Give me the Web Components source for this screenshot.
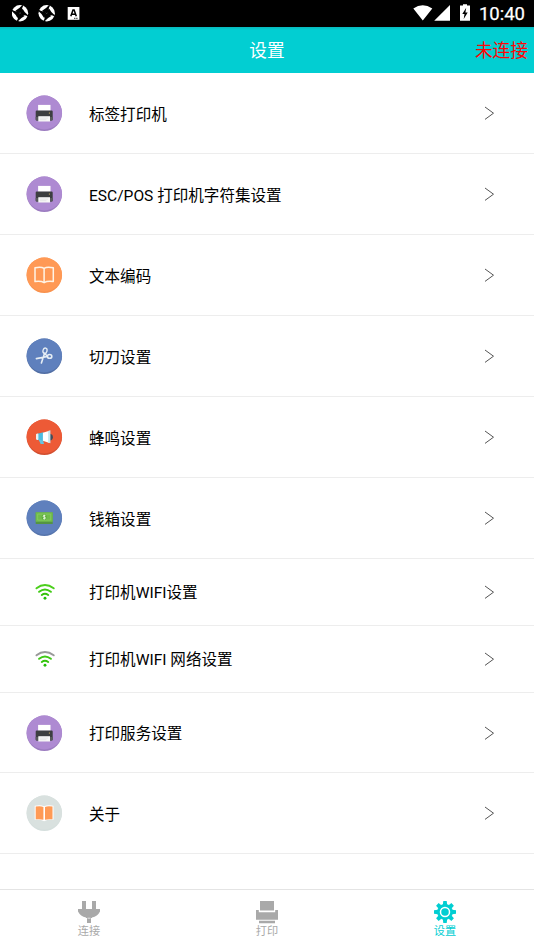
<!DOCTYPE html>
<html lang="zh-CN">
<head>
<meta charset="utf-8">
<title>设置</title>
<style>
html,body{margin:0;height:100%;background:#fff}
body{font-family:Roboto,"Noto Sans CJK SC",sans-serif;overflow:hidden}
</style>
</head>
<body>
<settings-app></settings-app>
<script>
const PRINTER = `<path d="M11.700 9.600h12.400v6H11.700z" fill="#fff"/><path d="M9.300 16.300q0-1 1-1h15q1 0 1 1v8q0 1-1 1h-15q-1 0-1-1z" fill="#3c3e40"/><path d="M9.300 21.600h17v2.700q0 1-1 1h-15q-1 0-1-1z" fill="#57595b"/><path d="M11.900 20.900h11.700v5.300H11.900z" fill="#f7f7f7"/><path d="M13.500 22.800h8M13.500 24.400h6.500" stroke="#d5d5d5" stroke-width=".5"/><circle cx="23" cy="17.700" r=".6" fill="#e8c060"/>`;
const disc = (c, d, inner) => `<svg width="37" height="36" viewBox="-.4 -.3 37 36"><circle cx="17.900" cy="18" r="17.700" fill="${d}"/><path d="M.2 17.100a17.700 16.800 0 0 1 35.400 0a17.700 17 0 0 1-35.400 0z" fill="${c}"/>${inner}</svg>`;
const wifi = (outer) => `<svg width="37" height="36" viewBox="-.4 -.3 37 36" fill="none" stroke-width="2" stroke-linecap="round"><path d="M10.100 14Q18.500 7.600 27.300 14" stroke="${outer}"/><path d="M12.700 17.500Q18.500 12.900 24.500 17.500" stroke="#3fc914"/><path d="M15.400 20.700Q18.500 18.400 21.800 20.700" stroke="#35c30c"/><circle cx="18.600" cy="23.900" r="1.450" fill="#22bd08"/></svg>`;
const ICONS = {
  printer: disc('#ae8ad2', '#9c7cc0', PRINTER),
  book: disc('#ff9955', '#f9924e', `<path d="M8.600 10.500q6-1.500 9.100.5q3.200-2 9.200-.5v13.800q-6-.8-9.200 1.100q-3.100-1.900-9.100-1.100zM17.700 11v14.300" fill="none" stroke="#fff4e6" stroke-width="1.500" stroke-linejoin="round"/>`),
  scissors: disc('#5f80bd', '#526fa5', `<g fill="none" stroke="#e6edf4" stroke-linecap="round"><ellipse cx="18.600" cy="12.400" rx="2" ry="2.700" stroke-width="1.300" transform="rotate(15 18.600 12.400)"/><ellipse cx="23.200" cy="18.100" rx="2.200" ry="1.900" stroke-width="1.600"/><path d="M18.100 15.200L15 24.700M21 18.200L10 20.300M18 15l3 3" stroke-width="1.600"/></g>`),
  horn: disc('#ed5a36', '#d34f30', `<path d="M23.500 14.500q3 .5 3 3.400t-3 3.400z" fill="#444c59"/><path d="M11 14.500L17 13v9l-6-1.500z" fill="#4bbce0"/><path d="M9.600 15q1-1.200 2.400-.5v6q-1.500.7-2.400-.5z" fill="#eee"/><path d="M12 20l4.800 1.500.8 3.300h-3.300z" fill="#63c5e2"/><path d="M16.500 13.500L23 11.400v12.200L16.500 21.500z" fill="#fff"/><path d="M21.700 11.800l2.300-.8v13l-2.300-.8z" fill="#c8e7ef"/>`),
  money: disc('#5f80bd', '#5675ad', `<path d="M9.300 12.300h17v11.500h-17z" fill="#549443"/><path d="M9.300 12h17v9.500h-17z" fill="#70bd4c"/><path d="M11.300 13.800h13v6h-13z" fill="none" stroke="#8ccf66" stroke-width=".7"/><ellipse cx="17.800" cy="16.800" rx="2.500" ry="2.900" fill="#5dab40"/><path d="M19 15.300q-2.300-.8-2.300.5 0 1 1.200 1t1.200 1q0 1.200-2.400.5M17.900 14.400v4.800" fill="none" stroke="#e9f9df" stroke-width=".9"/>`),
  about: disc('#d9e1df', '#d5dfdd', `<path d="M8.300 10.400q6-1.300 9.400.6q3.400-1.900 9.400-.6v14q-6-.5-9.400 1.600q-3.400-2.100-9.400-1.600z" fill="#fff"/><path d="M9.300 11.300q5-1.100 7.700.5v12.700q-3-1-7.700-.5zM26.100 11.300q-5-1.100-7.500.5v12.700q3-1 7.500-.5z" fill="#ff9a55"/>`),
  wifi: wifi('#4ccf1c'),
  wifigray: wifi('#999')
};
const TABS = {
  plug: `<path d="M4 0h4v8H4zM14 0h4v8h-4zM0 8h22v2.500q-2.500 5-8 6v.500H8v-.5Q2.500 15.500 0 10.500zM9 16h4v6H9z"/><path d="M9.500 17.200h3" stroke="#fff" stroke-width=".7"/>`,
  print: `<path d="M4 0h14v9.500H4zM0 9h2.800v2.300h16.400V9H22v9.700H0zM3 19.700h16v2.500H3z"/>`,
  gear: `<g transform="translate(11 11)"><path d="M-2.200-7L-1.700-11H1.700L2.200-7zM-2.200 7L-1.700 11H1.700L2.200 7zM-7-2.200L-11-1.700V1.700L-7 2.200zM7-2.200L11-1.700V1.700L7 2.200z"/><g transform="rotate(45)"><path d="M-2.200-7L-1.800-10.800H1.800L2.200-7zM-2.200 7L-1.800 10.800H1.800L2.200 7zM-7-2.200L-10.800-1.800V1.800L-7 2.200zM7-2.200L10.800-1.800V1.800L7 2.200z"/></g><circle r="7.900"/><circle r="4.500" fill="none" stroke="#fff" stroke-width="1.500"/></g>`
};
function define(name, render){
  customElements.define(name, class extends HTMLElement{
    connectedCallback(){ if(!this.shadowRoot) this.attachShadow({mode:'open'}).innerHTML = render(this); }
  });
}
define('status-bar', () => `<style>
:host{display:flex;align-items:center;box-sizing:border-box;height:27px;background:#000;color:#fff;padding:0 9px 0 12px;justify-content:space-between}
div{display:flex;align-items:center}svg{display:block}
.time{font-size:18.500px;line-height:27px;padding-top:1px;height:26px;margin-left:8px;font-weight:400;-webkit-text-stroke:.25px #fff}
</style><div>
<svg width="70" height="27" viewBox="12 0 70 27"><defs><path id="b" d="M0 0L-4.600-2.600Q-1-4.200 2.300-8.300L3.500-7.900Q1.200-4.800 2.600-2.600z"/><g id="s"><circle r="8.200" fill="#fff"/><use href="#b"/><use href="#b" transform="rotate(90)"/><use href="#b" transform="rotate(180)"/><use href="#b" transform="rotate(270)"/></g></defs><use href="#s" x="20" y="13.300"/><use href="#s" x="46.700" y="13.300"/><rect x="67.700" y="7" width="11.700" height="12.800" fill="#fff"/><path d="M70.800 16.200L73 10h1.100l2.200 6.200M71.700 14.300h3.800" fill="none" stroke="#000" stroke-width="1.500"/><path d="M74 18.300h4" stroke="#000" stroke-width=".8" stroke-dasharray="1.500 .6"/></svg></div><div>
<svg width="58" height="27" viewBox="414 0 58 27" fill="#fff"><path d="M414.300 8.600Q423.700 1.800 433.300 8.600L423.800 20.500zM451 5v15.800h-15.800zM464 4.200h4v1.400h3v15.200H461V5.600h3z"/><path d="M467.200 7.800L463.300 14h2.200l-.8 5 4-6.500h-2.300z" fill="#000"/></svg><span class="time">10:40</span></div>`);
define('app-header', () => `<style>
:host{display:grid;grid-template-columns:1fr auto 1fr;align-items:center;box-sizing:border-box;height:46px;padding:2px 6px 0;background:linear-gradient(#08b9bc,#02ced2 3px,#02ced2);color:#fff;font-size:17.700px;line-height:26px}
.title{grid-column:2}.state{justify-self:end;color:#ff0505}
</style><span class="title"><slot></slot></span><span class="state"><slot name="state"></slot></span>`);
define('setting-row', el => `<style>
:host{display:flex;align-items:center;box-sizing:border-box;height:81px;padding:0 39px 0 26px;border-bottom:1px solid #ededed;font-size:15.550px;line-height:24px;color:#000}
:host([compact]){height:67px}
:host(:nth-last-of-type(2)){height:80px}
.icon,.icon svg,.arrow{display:block;flex:none}.label{flex:1;margin-left:26px;padding-top:3px;white-space:nowrap}
:host([compact]) .label,:host(:nth-last-of-type(2)) .label{padding-top:2px}
</style><span class="icon">${ICONS[el.getAttribute('icon')]}</span><span class="label"><slot></slot></span><svg class="arrow" width="12" height="14" viewBox="0 0 12 14"><path d="M2 1L10.500 7.200L2 13.400" fill="none" stroke="#555" stroke-width="1"/></svg>`);
define('tab-item', el => `<style>
:host{display:flex;flex:1;flex-direction:column;align-items:center;color:#a9a9a9;font-size:11.200px;line-height:16px;padding-top:11px}
:host([active]){color:#02ced2}
svg{display:block;margin-bottom:.5px}
</style><svg width="22" height="22.500" viewBox="0 0 22 22.500" fill="currentColor">${TABS[el.getAttribute('icon')]}</svg><slot></slot>`);
define('tab-bar', () => `<style>:host{display:flex;box-sizing:border-box;height:61px;border-top:1px solid #e4e4e4;background:#fff}</style><slot></slot>`);
define('settings-app', () => `<style>
:host{display:flex;flex-direction:column;width:534px;height:950px;background:#fff}
main{flex:1;min-height:0}
</style><status-bar></status-bar><app-header>设置<span slot="state">未连接</span></app-header>
<main>
<setting-row icon="printer">标签打印机</setting-row>
<setting-row icon="printer">ESC/POS 打印机字符集设置</setting-row>
<setting-row icon="book">文本编码</setting-row>
<setting-row icon="scissors">切刀设置</setting-row>
<setting-row icon="horn">蜂鸣设置</setting-row>
<setting-row icon="money">钱箱设置</setting-row>
<setting-row icon="wifi" compact>打印机WIFI设置</setting-row>
<setting-row icon="wifigray" compact>打印机WIFI 网络设置</setting-row>
<setting-row icon="printer">打印服务设置</setting-row>
<setting-row icon="about">关于</setting-row>
</main>
<tab-bar><tab-item icon="plug">连接</tab-item><tab-item icon="print">打印</tab-item><tab-item icon="gear" active>设置</tab-item></tab-bar>`);
</script>
</body>
</html>
